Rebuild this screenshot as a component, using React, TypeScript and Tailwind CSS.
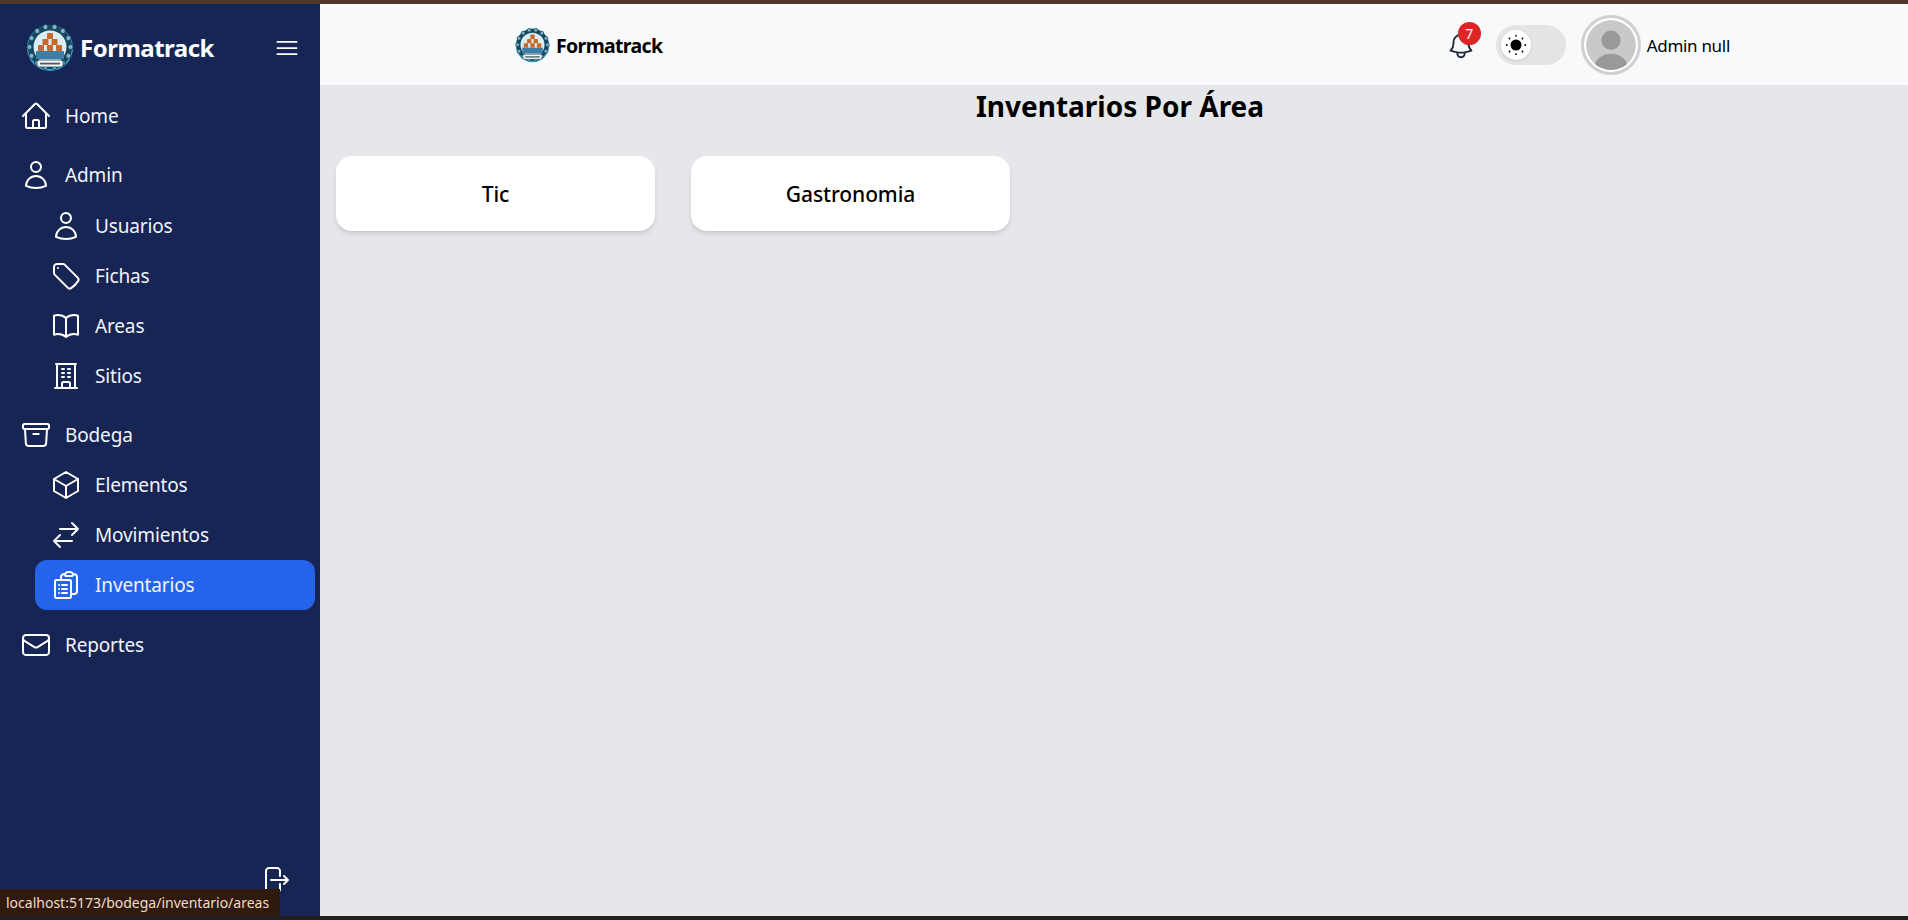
import type { ComponentType } from "react";
import {
  HiOutlineArchiveBox,
  HiOutlineArrowRightOnRectangle,
  HiOutlineArrowsRightLeft,
  HiOutlineBars3,
  HiOutlineBell,
  HiOutlineBookOpen,
  HiOutlineBuildingOffice,
  HiOutlineClipboardDocumentList,
  HiOutlineCube,
  HiOutlineEnvelope,
  HiOutlineHome,
  HiOutlineTag,
  HiOutlineUser,
} from "react-icons/hi2";

type IconType = ComponentType<{ className?: string }>;

const NavRow = ({
  icon: Icon,
  label,
  sub = false,
  active = false,
}: {
  icon: IconType;
  label: string;
  sub?: boolean;
  active?: boolean;
}) => (
  <div
    className={`flex h-[50px] items-center gap-[13px] ${
      sub ? "ml-[35px] mr-[5px] pl-[15px]" : "pl-[20px]"
    } ${active ? "rounded-xl bg-[#2563eb]" : ""}`}
  >
    <Icon className="size-[32px] shrink-0 text-white" />
    <span className="pt-px text-[19px] tracking-[-0.15px] text-[#f1f3f8]">{label}</span>
  </div>
);

const Logo = ({ className }: { className: string }) => {
  const dots = Array.from({ length: 14 }, (_, i) => {
    const a = (i / 14) * Math.PI * 2;
    return { x: 24 + Math.cos(a) * 20.5, y: 23 + Math.sin(a) * 20.5 };
  });
  const boxes = [
    [21, 9],
    [16.5, 15],
    [25.5, 15],
    [12, 21],
    [21, 21],
    [30, 21],
  ];

  return (
    <svg viewBox="0 0 48 48" className={className}>
      <circle cx="24" cy="24" r="23" fill="#38a3cf" />
      <circle cx="24" cy="23" r="22" fill="#16465f" />
      {dots.map((d, i) => (
        <circle key={i} cx={d.x} cy={d.y} r="2.6" fill="#7fb4c6" stroke="#16465f" strokeWidth="1" />
      ))}
      <circle cx="24" cy="23" r="16.5" fill="#d8eef2" />
      <rect x="10" y="27" width="28" height="8" fill="#3c7ea6" />
      {boxes.map(([x, y], i) => (
        <rect key={i} x={x} y={y} width="6" height="6" rx="0.8" fill="#c8682a" />
      ))}
      <rect x="11" y="36" width="26" height="7" rx="2" fill="#f5f7f7" stroke="#16465f" strokeWidth="0.8" />
      <rect x="14" y="38.7" width="20" height="1.8" fill="#4a5a60" />
    </svg>
  );
};

const Sidebar = () => (
  <aside className="flex w-[320px] shrink-0 flex-col bg-[#172554] pb-[20px]">
    <div className="flex h-[87px] items-center pl-[26px] pr-[19px]">
      <Logo className="size-[48px] shrink-0" />
      <span className="ml-[6px] text-[24px] font-bold tracking-[-0.5px] text-white">Formatrack</span>
      <HiOutlineBars3 className="ml-auto size-[28px] text-white" />
    </div>
    <nav className="flex flex-col gap-[9px]">
      <NavRow icon={HiOutlineHome} label="Home" />
      <div className="flex flex-col">
        <div className="pb-px">
          <NavRow icon={HiOutlineUser} label="Admin" />
        </div>
        <NavRow icon={HiOutlineUser} label="Usuarios" sub />
        <NavRow icon={HiOutlineTag} label="Fichas" sub />
        <NavRow icon={HiOutlineBookOpen} label="Areas" sub />
        <NavRow icon={HiOutlineBuildingOffice} label="Sitios" sub />
      </div>
      <div className="flex flex-col">
        <NavRow icon={HiOutlineArchiveBox} label="Bodega" />
        <NavRow icon={HiOutlineCube} label="Elementos" sub />
        <NavRow icon={HiOutlineArrowsRightLeft} label="Movimientos" sub />
        <NavRow icon={HiOutlineClipboardDocumentList} label="Inventarios" sub active />
      </div>
      <div className="pt-px">
        <NavRow icon={HiOutlineEnvelope} label="Reportes" />
      </div>
    </nav>
    <div className="mt-auto flex justify-end pr-[29px]">
      <HiOutlineArrowRightOnRectangle className="size-[32px] text-white" />
    </div>
  </aside>
);

const ThemeToggle = () => (
  <div className="flex h-[40px] w-[70px] items-center rounded-full bg-[#e4e4e6] pl-[5px]">
    <div className="flex size-[30px] items-center justify-center rounded-full bg-white shadow-sm">
      <svg viewBox="0 0 24 24" className="size-[24px]">
        <circle cx="12" cy="12" r="5.5" fill="#000" />
        {[0, 45, 90, 135, 180, 225, 270, 315].map((a) => (
          <circle key={a} cx="12" cy="2.8" r="0.9" fill="#000" transform={`rotate(${a} 12 12)`} />
        ))}
      </svg>
    </div>
  </div>
);

const Avatar = () => (
  <div className="flex size-[60px] items-center justify-center rounded-full border-[3px] border-[#d0d0d2] bg-white">
    <svg viewBox="0 0 52 52" className="size-[50px] rounded-full">
      <circle cx="26" cy="26" r="26" fill="#c9c9c9" />
      <circle cx="26" cy="21" r="10" fill="#999" />
      <ellipse cx="26" cy="49" rx="17" ry="14" fill="#999" />
    </svg>
  </div>
);

const Header = () => (
  <header className="flex h-[81px] shrink-0 items-center bg-[#f8f9fb] pl-[195px] pr-[178px] pt-px">
    <Logo className="size-[35px] shrink-0" />
    <span className="ml-[6px] pt-px text-[19.5px] font-bold tracking-[-0.65px] text-black">Formatrack</span>
    <div className="ml-auto flex items-center">
      <div className="relative mr-[20px] mt-[2px]">
        <HiOutlineBell className="size-[30px] text-[#1f2937]" />
        <span className="absolute -top-[9px] left-[12px] flex size-[23px] items-center justify-center rounded-full bg-[#dc2626] text-[14px] text-white">
          7
        </span>
      </div>
      <ThemeToggle />
      <div className="ml-[15px] flex items-center gap-[6px]">
        <Avatar />
        <span className="pt-px text-[17px] tracking-[-0.3px] text-black">Admin null</span>
      </div>
    </div>
  </header>
);

const AreaCard = ({ name }: { name: string }) => (
  <div className="flex h-[75px] w-[319px] items-center justify-center rounded-2xl bg-white pt-[2px] text-[21px] font-medium tracking-[-0.1px] text-black shadow-md">
    {name}
  </div>
);

export default function App() {
  return (
    <div
      className="relative flex h-[920px] w-full flex-col overflow-hidden bg-[#202020]"
      style={{ fontFamily: '"Noto Sans", sans-serif' }}
    >
      <div className="h-[4px] shrink-0 bg-[#4f3829]" />
      <div className="flex min-h-0 flex-1">
        <Sidebar />
        <div className="flex min-w-0 flex-1 flex-col bg-[#e5e7eb]">
          <Header />
          <main className="flex-1 px-[16px]">
            <h1 className="pl-[12px] text-center text-[28px] font-bold leading-[42px] text-black">
              Inventarios Por Área
            </h1>
            <div className="mt-[29px] flex gap-[36px]">
              <AreaCard name="Tic" />
              <AreaCard name="Gastronomia" />
            </div>
          </main>
        </div>
      </div>
      <div className="h-[4px] shrink-0 bg-[#202020]" />
      <div className="absolute bottom-[4px] left-0 flex h-[27px] w-[280px] items-center bg-[#301a0e] pl-[6px] text-[14px] text-[#f0dcc8]">
        localhost:5173/bodega/inventario/areas
      </div>
    </div>
  );
}
